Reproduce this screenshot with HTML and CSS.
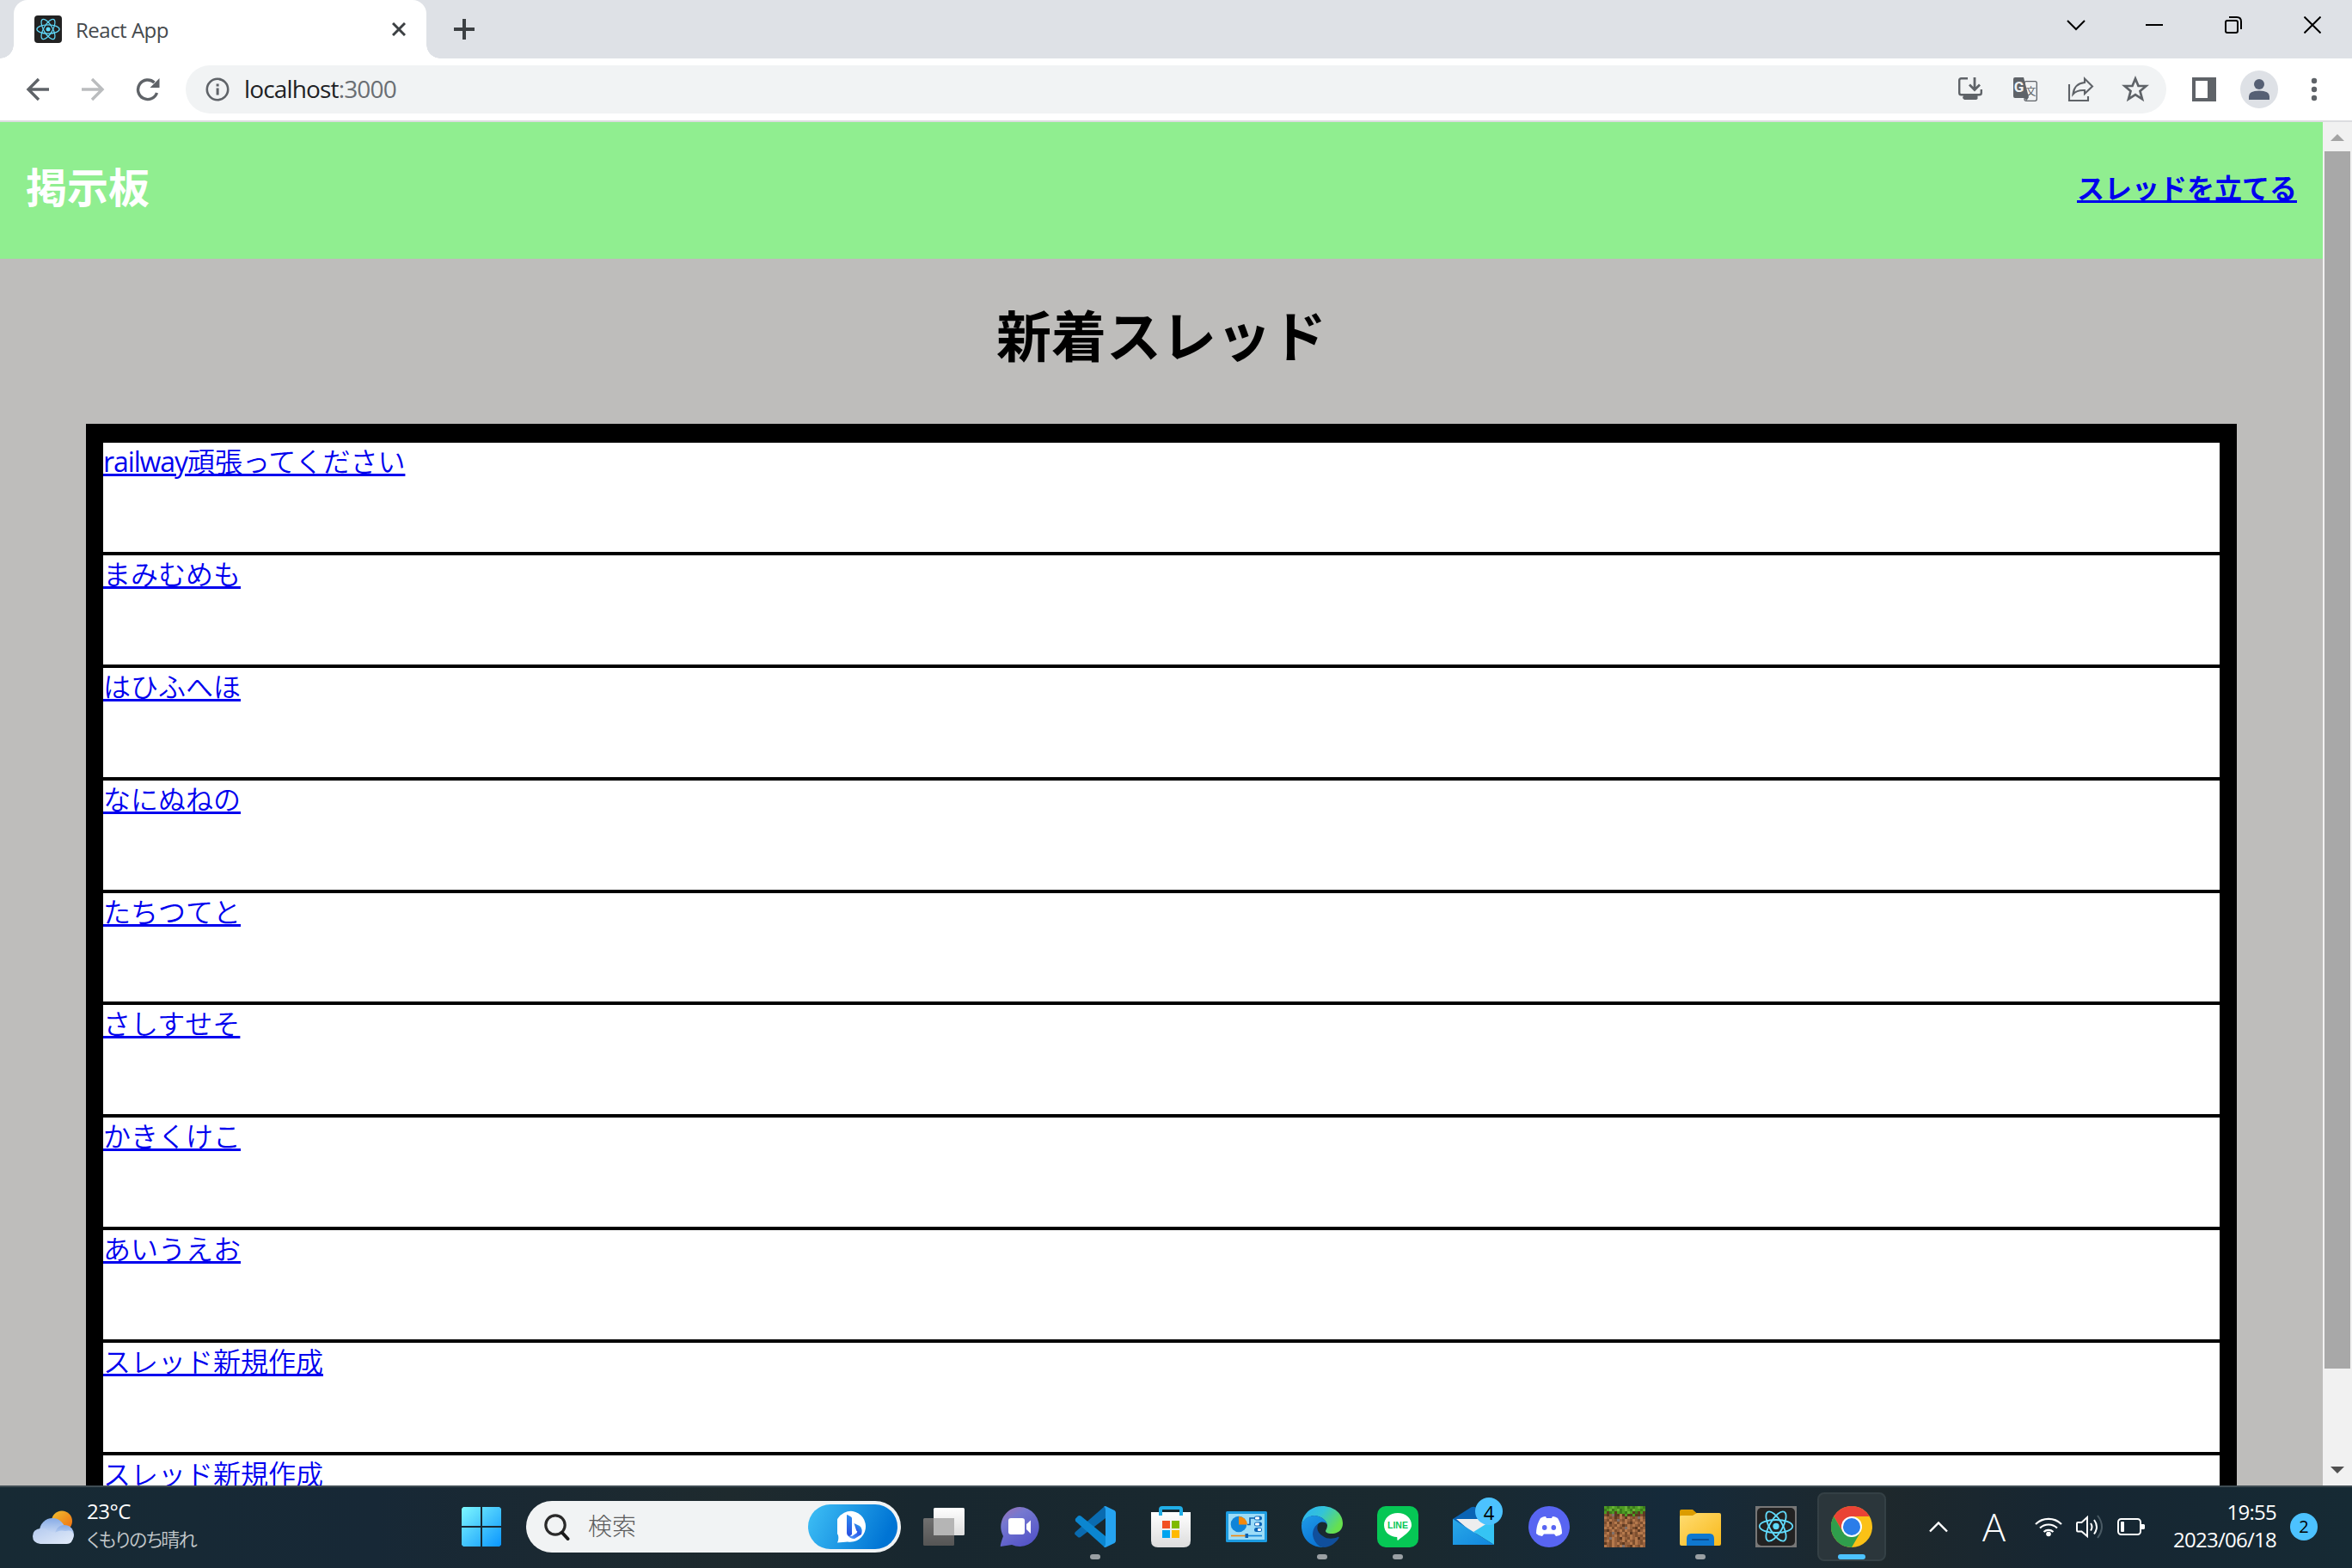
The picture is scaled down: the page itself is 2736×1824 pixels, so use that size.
FILE: index.html
```html
<!DOCTYPE html>
<html lang="ja">
<head>
<meta charset="utf-8">
<title>React App</title>
<link rel="stylesheet" href="styles.css">
</head>
<body>
<svg class="defs" width="0" height="0">
  <symbol id="react" viewBox="-12 -12 24 24">
    <g fill="none" stroke="#61dafb" stroke-width="1">
      <ellipse rx="10.5" ry="4.1"/>
      <ellipse rx="10.5" ry="4.1" transform="rotate(60)"/>
      <ellipse rx="10.5" ry="4.1" transform="rotate(120)"/>
    </g>
    <circle r="2" fill="#61dafb"/>
  </symbol>
</svg>

<div class="tabstrip">
  <div class="tab">
    <svg class="favicon" width="32" height="32"><rect width="32" height="32" rx="4" fill="#222"/><use href="#react" x="1" y="1" width="30" height="30"/></svg>
    <span class="tab-title">React App</span>
    <svg width="16" height="16" viewBox="0 0 16 16"><path d="M1 1L15 15M15 1L1 15" stroke="#3c4043" stroke-width="3"/></svg>
  </div>
  <svg class="newtab" width="24" height="24"><path d="M12 0V24M0 12H24" stroke="#3c4043" stroke-width="4"/></svg>
  <div class="winbtns">
    <span><svg class="caret" width="22" height="14" viewBox="0 0 22 14" ><path d="M1 2L11 12L21 2" fill="none" stroke="#000" stroke-width="2"/></svg></span>
    <span><svg width="20" height="2"><rect width="20" height="2"/></svg></span>
    <span><svg width="20" height="20" fill="none" stroke="#000" stroke-width="2"><rect x="1" y="5" width="14" height="14" rx="2"/><path d="M5 1H14Q19 1 19 6V15"/></svg></span>
    <span><svg width="20" height="20"><path d="M.5 .5L19.5 19.5M19.5 .5L.5 19.5" stroke="#000" stroke-width="2"/></svg></span>
  </div>
</div>

<div class="toolbar">
  <div class="nav">
    <span><svg width="28" height="28" fill="none" stroke="#5f6368" stroke-width="3.4"><path d="M27 14H3M15 2L3 14L15 26"/></svg></span>
    <span><svg width="28" height="28" fill="none" stroke="#babcbe" stroke-width="3.4"><path d="M1 14H25M13 2L25 14L13 26"/></svg></span>
    <span><svg width="28" height="28"><path d="M24.5 18A11.3 11.3 0 1 1 21.5 6" fill="none" stroke="#5f6368" stroke-width="3.4"/><path d="M27.500 1V12H16.500Z" fill="#5f6368"/></svg></span>
  </div>
  <div class="omnibox">
    <svg width="28" height="28"><circle cx="14" cy="14" r="12.2" fill="none" stroke="#5f6368" stroke-width="2.6"/><path d="M12.600 12.500h3v8h-3zM12.600 7.500h3v3h-3z" fill="#5f6368"/></svg>
    <span class="url">localhost<span class="port">:3000</span></span>
    <div class="actions">
      <svg width="32" height="32" fill="none" stroke="#5f6368" stroke-width="2.400"><path d="M13 3.200H5.500Q3.200 3.200 3.200 5.500V20Q3.200 22.300 5.500 22.300H26.500Q28.800 22.300 28.800 20V16"/><path d="M21 2V15.500M15 10.500L21 16.500L27 10.500" stroke-width="2.800"/><path d="M8 23H24.500V27L23 28H9L7 26Z" fill="#5f6368" stroke="none"/></svg>
      <svg width="32" height="32"><rect x="15" y="6.700" width="14.300" height="22.600" rx="2" fill="none" stroke="#5f6368" stroke-width="1.300"/><path d="M4 2H14L20 25L17.500 29L15 26H4Q2 26 2 24V4Q2 2 4 2Z" fill="#5f6368"/><text x="2.800" y="19" class="g">G</text><text x="16.500" y="22.500" class="bun">文</text></svg>
      <svg width="32" height="32" fill="none" stroke="#5f6368" stroke-width="2.100"><path d="M3 10V29H25V24"/><path d="M7.500 21.500Q9 9 21 8V3.500L30 12.500L21 21V17Q12 16.500 7.500 21.500Z"/></svg>
      <svg width="32" height="32"><path d="M16 3.500L19.500 12H28.500L21.500 18L24 27.300L16 22.200L8 27.300L10.500 18L3.500 12H12.500Z" fill="none" stroke="#5f6368" stroke-width="2.700"/></svg>
    </div>
  </div>
  <svg class="panel" width="28" height="28"><path fill-rule="evenodd" d="M0 0H28V28H0ZM4 4V24H18V4Z" fill="#5f6368"/></svg>
  <svg class="avatar" width="44" height="44"><circle cx="22" cy="22" r="22" fill="#dee1e6"/><circle cx="22" cy="16" r="6" fill="#566074"/><path d="M10 34V30Q10 23.500 22 23.500T34 30V34Z" fill="#566074"/></svg>
  <svg class="dots" width="8" height="28" fill="#5f6368"><circle cx="4" cy="4" r="3.200"/><circle cx="4" cy="14" r="3.200"/><circle cx="4" cy="24" r="3.200"/></svg>
</div>

<div class="viewport">
  <div class="page">
    <header class="header">
      <h1>掲示板</h1>
      <a class="create">スレッドを立てる</a>
    </header>
    <h2>新着スレッド</h2>
    <div class="threads">
      <div class="thread"><a><span class="latin">railway</span>頑張ってください</a></div>
      <div class="thread"><a>まみむめも</a></div>
      <div class="thread"><a>はひふへほ</a></div>
      <div class="thread"><a>なにぬねの</a></div>
      <div class="thread"><a>たちつてと</a></div>
      <div class="thread"><a>さしすせそ</a></div>
      <div class="thread"><a>かきくけこ</a></div>
      <div class="thread"><a>あいうえお</a></div>
      <div class="thread"><a>スレッド新規作成</a></div>
      <div class="thread"><a>スレッド新規作成</a></div>
    </div>
  </div>
  <div class="scrollbar">
    <svg width="16" height="8"><path d="M0 8L8 0L16 8Z" fill="#a3a3a3"/></svg>
    <div class="thumb"></div>
    <svg width="16" height="8"><path d="M0 0L8 8L16 0Z" fill="#505050"/></svg>
  </div>
</div>

<div class="taskbar">
  <div class="weather">
    <svg width="48" height="40" viewBox="0 0 48 40">
      <defs>
        <linearGradient id="sun" x1="0" y1="0" x2="1" y2="1"><stop offset="0" stop-color="#f0c030"/><stop offset="1" stop-color="#f06a10"/></linearGradient>
        <linearGradient id="cl" x1="0" y1="0" x2="0" y2="1"><stop offset="0" stop-color="#86abe6"/><stop offset=".6" stop-color="#cadaf4"/><stop offset="1" stop-color="#cfdef5"/></linearGradient>
        <linearGradient id="cl2" x1="0" y1="0" x2="1" y2="1"><stop offset="0" stop-color="#b4caef"/><stop offset="1" stop-color="#e3ecf9"/></linearGradient>
      </defs>
      <circle cx="34" cy="12.500" r="12" fill="url(#sun)"/>
      <circle cx="23" cy="24" r="15" fill="url(#cl)"/>
      <circle cx="37" cy="28" r="11" fill="url(#cl)"/>
      <path d="M9 21Q17 20 23 28Q30 22 38 24Q47 22 47.500 29Q47 39 39 39H9Q0 38 0 30Q0 22 9 21Z" fill="url(#cl2)"/>
    </svg>
    <div class="weather-text"><div>23°C</div><div class="cond">くもりのち晴れ</div></div>
  </div>

  <svg class="start" width="46" height="46"><defs><linearGradient id="win" gradientUnits="userSpaceOnUse" x1="0" y1="0" x2="46" y2="46"><stop offset="0" stop-color="#7df8ff"/><stop offset=".5" stop-color="#44c5fd"/><stop offset="1" stop-color="#0a96ff"/></linearGradient></defs><path fill="url(#win)" d="M2 0H22V22H0V2ZM24 0H44L46 2V22H24ZM0 24H22V46H2L0 44ZM24 24H46V44L44 46H24Z"/></svg>

  <div class="search">
    <svg width="30" height="31"><circle cx="13" cy="13" r="11.200" fill="none" stroke="#2a2a2a" stroke-width="3.200"/><path d="M21 22L27.500 29" stroke="#1a1a1a" stroke-width="4" stroke-linecap="round"/></svg>
    <span class="search-label">検索</span>
    <div class="bing">
      <svg width="36" height="38" viewBox="0 0 36 38">
        <defs><linearGradient id="bg" x1="0" y1="0" x2="0" y2="1"><stop offset="0" stop-color="#2b8df0"/><stop offset="1" stop-color="#2a4de0"/></linearGradient><linearGradient id="bg2" x1="0" y1="1" x2="1" y2="0"><stop offset="0" stop-color="#5aa8ff"/><stop offset=".6" stop-color="#2a58e8"/><stop offset="1" stop-color="#30c8e8"/></linearGradient></defs>
        <path d="M18 1A18 18 0 1 1 12 36.500Q7 37 0 37.500Q2 34 1 29A18 18 0 0 1 18 1Z" fill="#fff"/>
        <path d="M11.500 28L17 30L23 26L19.500 15L26 18Q30 21 28 28L20 33Q14 33 11.500 28Z" fill="url(#bg2)"/>
        <path d="M17 21V28L23.500 24.500Z" fill="#fff"/>
        <path d="M11 6Q11 4.500 12.500 5.500L16 7.500Q17 8 17 9.500V28L14 30Q11 29 11 26Z" fill="url(#bg)"/>
      </svg>
    </div>
  </div>

  <div class="apps">
    <span class="app"><svg width="48" height="48"><defs><linearGradient id="tv" x1="0" y1="0" x2="0" y2="1"><stop offset="0" stop-color="#fff"/><stop offset="1" stop-color="#ddd"/></linearGradient><linearGradient id="tv2" x1="0" y1="0" x2="0" y2="1"><stop offset="0" stop-color="#707070"/><stop offset="1" stop-color="#555"/></linearGradient></defs><rect y="14" width="36" height="32" rx="1.500" fill="url(#tv2)"/><rect x="12" y="2" width="36" height="32" rx="1.500" fill="url(#tv)"/><rect x="12" y="14" width="24" height="20" fill="#b5b5b5"/></svg></span>
    <span class="app"><svg width="48" height="48"><defs><linearGradient id="ch" x1="0" y1="0" x2=".6" y2="1"><stop offset="0" stop-color="#a070b0"/><stop offset=".35" stop-color="#7578d0"/><stop offset="1" stop-color="#5555c8"/></linearGradient></defs><path d="M24 1A22.500 23 0 1 1 15 45L2 47Q1 46 5 35A22.500 23 0 0 1 24 1Z" fill="url(#ch)"/><rect x="11" y="14" width="19" height="19" rx="3" fill="#fff"/><path d="M32 21L37 16.500V32L32 27Z" fill="#fff"/></svg></span>
    <span class="app run"><svg width="48" height="48"><path d="M36 0V14L7 36Q5 37 4 36L.5 33Q-.5 31.500 1 30L34 1Z" fill="#0a6bb0"/><path d="M.8 15L4 11.500Q6 10.500 8 12L36 35V48L34 47L1 17.500Z" fill="#0b86d0"/><path d="M34 .5L36 0L46.500 5Q48 6 48 8V40Q48 42 46.500 43L36 48L34 47.500Q36 47 36 44V4Q36 1 34 .5Z" fill="#25a3f0"/></svg></span>
    <span class="app"><svg width="48" height="48"><defs><linearGradient id="st" x1="0" y1="0" x2="0" y2="1"><stop offset="0" stop-color="#fff"/><stop offset="1" stop-color="#dcdcdc"/></linearGradient></defs><path d="M1 7H47V40Q47 48 39 48H9Q1 48 1 40Z" fill="url(#st)"/><path d="M12 11V4Q12 2 14 2H34Q36 2 36 4V11" fill="none" stroke="#20aee8" stroke-width="4"/><path d="M14 17h9v9h-9z" fill="#f25022"/><path d="M25 17h9v9h-9z" fill="#7fba00"/><path d="M14 28h9v9h-9z" fill="#00a4ef"/><path d="M25 28h9v9h-9z" fill="#ffb900"/></svg></span>
    <span class="app"><svg width="48" height="48"><rect y="6" width="48" height="36" rx="1.500" fill="#1c9be0"/><rect x="3" y="9" width="42" height="30" fill="#9cdcf8"/><circle cx="15" cy="21" r="9.300" fill="#1084d8"/><path d="M15 12A10 10 0 0 1 25 21.500H15Z" fill="#f5880a"/><path d="M25 21.500H28V14H34" fill="none" stroke="#0b5fae" stroke-width="1.600"/><g fill="#0b66b8"><rect x="33" y="11.500" width="9" height="5" rx="2.500"/><rect x="33" y="18.500" width="9" height="5" rx="2.500"/><rect x="33" y="25" width="9" height="5" rx="2.500"/></g><g fill="#fff"><rect x="34" y="12.500" width="5" height="3" rx="1"/><rect x="34" y="19.500" width="5" height="3" rx="1"/><rect x="37" y="26" width="4" height="3" rx="1"/></g><path d="M6 34.500H23" stroke="#f5880a" stroke-width="1.600"/><path d="M24 34.500H42" stroke="#1084d8" stroke-width="1.600"/><rect x="22.500" y="32" width="3.500" height="5" fill="#0b5fae"/></svg></span>
    <span class="app run"><svg width="48" height="48" viewBox="0 0 48 48"><defs><linearGradient id="e1" x1="0" y1="0" x2="1" y2=".5"><stop offset="0" stop-color="#2bb0f5"/><stop offset=".5" stop-color="#33c3d8"/><stop offset="1" stop-color="#66e04e"/></linearGradient><linearGradient id="e2" x1="0" y1="0" x2=".5" y2="1"><stop offset="0" stop-color="#1f9be8"/><stop offset="1" stop-color="#0a74d4"/></linearGradient></defs><path d="M0 22C1 9 11 0 24 0C38 0 48 9 48 20C48 28 42 32 35 32C30 32 28 30.500 28 29C28 28 30 26 30 22C29 16 22 11 14 11C7 12 2 16 0 22Z" fill="url(#e1)"/><path d="M0 22C2 15 8 11 15 11C22 11 29 16 30 22C29 19 26 18 23 18.500C18 20 14 26 14 33C14 40 19 47 26 48C11 48.500 -.5 38 0 22Z" fill="url(#e2)"/><path d="M20 20C15 23 13 28 13 33C14 41 19 47 27 48C34 47 40 43 43.500 37C44 35.500 43 35.500 42 36C38 38 30 39 25 35C18 31 17 25 20 20Z" fill="#104f9c"/></svg></span>
    <span class="app run"><svg width="48" height="48"><rect width="48" height="48" rx="10" fill="#06c755"/><path d="M24 8C33 8 40 14 40 22C40 30 28 36 24 40C22.500 39 24 37 23 36C13 35.500 8 29 8 22C8 14 15 8 24 8Z" fill="#fff"/><text x="12" y="26" class="line">LINE</text></svg></span>
    <span class="app"><svg width="48" height="48"><defs><linearGradient id="ml" x1="0" y1="0" x2="1" y2="1"><stop offset="0" stop-color="#2aa9e8"/><stop offset="1" stop-color="#1086de"/></linearGradient></defs><path d="M0 15L21 1.500Q24 0 27 1.500L48 15V30H0Z" fill="#0a63b4"/><path d="M4 15H44V28L24 32Z" fill="#eee"/><path d="M48 15V45L24 30Z" fill="#35c4f4"/><path d="M0 15L48 45H0Z" fill="url(#ml)"/></svg><b class="badge">4</b></span>
    <span class="app"><svg width="48" height="48"><circle cx="24" cy="24" r="24" fill="#5865f2"/><path d="M14 14Q17 12 20 12L21 14H27L28 12Q31 12 34 14Q39 22 39 32Q36 35 32 35L30 32.500H18L16 35Q12 35 9 32Q9 22 14 14Z" fill="#fff"/><ellipse cx="18.700" cy="25" rx="2.800" ry="3" fill="#5865f2"/><ellipse cx="29.300" cy="25" rx="2.800" ry="3" fill="#5865f2"/></svg></span>
    <span class="app"><svg id="block" width="48" height="48" viewBox="0 0 16 16" shape-rendering="crispEdges"></svg></span>
    <span class="app run"><svg width="48" height="48"><defs><linearGradient id="fo" x1="0" y1="0" x2="1" y2="1"><stop offset="0" stop-color="#ffdc72"/><stop offset="1" stop-color="#f8b91a"/></linearGradient></defs><path d="M0 6Q0 4 2 4H15L20 8.500V14H0Z" fill="#dc9c00"/><path d="M0 12Q0 11 2 11H15L20 8H46Q48 8 48 10V44Q48 46 46 46H2Q0 46 0 44Z" fill="url(#fo)"/><path d="M8 46V38Q8 32 13 32H35Q40 32 40 38V46Z" fill="#0f78d0"/><path d="M15 39H33" stroke="#0a4f96" stroke-width="2.200" stroke-linecap="round"/></svg></span>
    <span class="app"><svg width="48" height="48"><rect width="48" height="48" fill="#777"/><rect x="2" y="2" width="44" height="44" rx="5" fill="#222"/><use href="#react" x="2" y="1.500" width="44" height="44"/></svg></span>
    <span class="app active"><svg width="48" height="48" viewBox="0 0 48 48"><circle cx="24" cy="24" r="24" fill="#fbc116"/><path d="M3.200 12A24 24 0 0 1 44.800 12H24L13.600 30Z" fill="#ea4335"/><path d="M3.200 12A24 24 0 0 0 24 48L34.400 30L24 24L13.600 30Z" fill="#2f9e4c"/><circle cx="24" cy="24" r="12" fill="#fff"/><circle cx="24" cy="24" r="10" fill="#2b7de9"/></svg></span>
  </div>

  <div class="tray">
    <svg class="up" width="22" height="14"><path d="M1 12.500L11 2.500L21 12.500" fill="none" stroke="#fff" stroke-width="2.400"/></svg>
    <span class="ime">A</span>
    <svg width="32" height="26" fill="none" stroke="#fff" stroke-width="2.200"><path d="M1 10A21.500 21.500 0 0 1 31 10"/><path d="M6 14.500A14.500 14.500 0 0 1 26 14.500"/><path d="M10.500 19A8 8 0 0 1 21.500 19"/><circle cx="16" cy="21.500" r="2.800" fill="#fff" stroke="none"/></svg>
    <svg width="32" height="28" fill="none" stroke="#fff" stroke-width="2"><path d="M1 10Q1 9 2 9H6.500L13 3V25L6.500 19.500H2Q1 19.500 1 18Z"/><path d="M17 10Q20 14 17 18.500M21 6Q27 14 21 22.500"/><path d="M25 1Q35 14 25 27" stroke="#4a5a64"/></svg>
    <svg width="32" height="20"><rect x="1" y="1" width="26" height="18" rx="3.500" fill="none" stroke="#fff" stroke-width="2"/><rect x="4" y="4" width="4" height="12" rx="1" fill="#fff"/><path d="M28 7H31L32 8V12L31 13H28Z" fill="#fff"/></svg>
    <div class="clock"><div>19:55</div><div>2023/06/18</div></div>
    <span class="count">2</span>
  </div>
</div>
<script src="block.js"></script>
</body>
</html>
```
FILE: block.js
```js
// Grass block icon: 16x16 pixels, g/G/l = greens, digits = dirt tones, s = stone
const rows = [
  'gGglgGgglGgGglgG',
  'GglGglGglgGlggGg',
  'gdGgdgGgGlgdGdgd',
  '1d2sdd3dgddgdd1d',
  '3212d132d3212s31',
  '21321s2132132132',
  '13d2313231d23213',
  '2312132d13232131',
  '32313212s321d312',
  '1d23123132132d23',
  '231s2d2313d21332',
  '3212313212321213',
  '12s321d321323d21',
  '2313212313213213',
  'd213231d22313212',
  '3213213s21d32132'
];
const colors = { g: '#4d9c23', G: '#3c7a1c', l: '#67b235', d: '#5e3a22', 1: '#7d4f2f', 2: '#96603c', 3: '#b5794c', s: '#80706a' };
const svg = document.getElementById('block');
rows.forEach((row, y) => [...row].forEach((c, x) => {
  const r = document.createElementNS('http://www.w3.org/2000/svg', 'rect');
  r.setAttribute('x', x);
  r.setAttribute('y', y);
  r.setAttribute('width', 1);
  r.setAttribute('height', 1);
  r.setAttribute('fill', colors[c]);
  svg.append(r);
}));
```
FILE: styles.css
```css
* { box-sizing: border-box; }
body {
  margin: 0;
  width: 2736px;
  height: 1824px;
  overflow: hidden;
  display: flex;
  flex-direction: column;
  font-family: "Open Sans", "Noto Sans CJK JP", sans-serif;
  background: #fff;
}
svg { display: block; flex: none; }
.defs { position: absolute; }

/* tab strip */
.tabstrip { height: 68px; flex: none; display: flex; background: #dee1e6; padding-left: 16px; }
.tab {
  position: relative;
  width: 480px;
  display: flex;
  align-items: center;
  padding: 0 24px;
  background: #fff;
  border-radius: 16px 16px 0 0;
}
.tab::before, .tab::after {
  content: "";
  position: absolute;
  bottom: 0;
  width: 16px;
  height: 16px;
}
.tab::before { left: -16px; background: radial-gradient(circle at 0 0, transparent 15.5px, #fff 16px); }
.tab::after { right: -16px; background: radial-gradient(circle at 100% 0, transparent 15.5px, #fff 16px); }
.tab-title { flex: 1; margin-left: 16px; padding-top: 2px; font-size: 24px; line-height: 32px; letter-spacing: -.5px; color: #45494d; }
.newtab { margin: 22px 0 0 32px; }
.winbtns { margin-left: auto; display: flex; height: 58px; }
.winbtns span { width: 92px; display: flex; align-items: center; justify-content: center; }
.caret { margin-left: 2px; }

/* toolbar */
.toolbar { height: 74px; flex: none; display: flex; align-items: center; border-bottom: 2px solid #dcdde0; padding-left: 12px; }
.nav { display: flex; width: 204px; }
.nav span { width: 64px; display: flex; justify-content: center; }
.omnibox { width: 2304px; height: 56px; border-radius: 28px; background: #f1f3f4; display: flex; align-items: center; padding: 0 20px 0 23px; }
.url { margin-left: 17px; padding-bottom: 2px; font-size: 28px; line-height: 40px; letter-spacing: -.85px; color: #202124; }
.port { color: #6a6e73; }
.actions { margin-left: auto; display: flex; gap: 32px; }
.g { font: bold 17px Roboto, sans-serif; fill: #f1f3f4; }
.bun { font: 12px "Noto Sans CJK JP", sans-serif; fill: #5f6368; }
.panel { margin-left: 30px; }
.avatar { margin-left: 28px; }
.dots { margin-left: 38px; }

/* page */
.viewport { flex: 1; min-height: 0; display: flex; overflow: hidden; }
.page { width: 2702px; background: #bebdbb; overflow: hidden; }
.header { height: 159px; background: #90ee90; display: flex; justify-content: space-between; align-items: center; padding: 0 30px; }
h1 { margin: 0; color: #fff; font-size: 48px; line-height: 72px; padding-bottom: 7px; }
h2 { margin: 45px 0 57px; text-align: center; font-size: 64px; line-height: 90px; height: 90px; }
a { color: #0000ee; text-decoration: underline 3px; text-underline-offset: 2px; }
.create { font-size: 32px; font-weight: bold; line-height: 44px; padding-bottom: 5px; }
.threads { margin: 0 100px; border: 20px solid #000; border-top-width: 22px; background: #fff; }
.thread { height: 130.89px; border-bottom: 4px solid #000; font-size: 32px; line-height: 43px; font-weight: 350; }
.latin { letter-spacing: -1.1px; font-weight: 400; }
.scrollbar { width: 34px; background: #f1f1f1; display: flex; flex-direction: column; align-items: center; padding: 14px 0 14px; }
.thumb { width: 30px; height: 1416px; margin: 12px 0 auto; background: #a8a8a8; }

/* taskbar */
.taskbar {
  height: 96px;
  flex: none;
  display: flex;
  align-items: center;
  border-top: 2px solid #3f4c53;
  padding-bottom: 2px;
  background: linear-gradient(90deg, #172a34 0, #172836 16%, #1e2a2e 31%, #18272f 39%, #1a292f 60%, #152a3a 71%, #1e282c 80%, #162632 88%, #162a34 100%);
  color: #fff;
}
.weather { width: 499px; display: flex; padding: 1px 0 0 38px; margin-right: 38px; align-items: center; }
.weather-text { margin-left: 15px; padding-bottom: 5px; font-size: 24px; line-height: 32px; letter-spacing: -.5px; }
.cond { color: #c4c9cc; font-size: 22px; font-weight: 350; letter-spacing: -1.7px; font-feature-settings: "palt"; }
.start { margin-right: 29px; }
.search { width: 436px; height: 60px; border-radius: 30px; background: #f1f3f4; display: flex; align-items: center; padding: 0 4px 0 21px; }
.search-label { margin-left: 21px; padding-bottom: 2px; font-size: 28px; line-height: 40px; color: #5c5c5c; font-weight: 300; }
.bing { margin-left: auto; width: 104px; height: 52px; border-radius: 26px; background: linear-gradient(115deg, #3fc0f6, #0074d4 85%); display: flex; align-items: center; justify-content: center; }
.apps { display: flex; margin-left: 10px; gap: 8px; }
.app { position: relative; width: 80px; height: 80px; display: flex; align-items: center; justify-content: center; border-radius: 8px; }
.app.active { background: #2b363b; border: 2px solid #344045; }
.run::after, .active::after { content: ""; position: absolute; bottom: 2px; width: 12px; height: 6px; border-radius: 3px; background: #9aa0a4; }
.active::after { bottom: 0; width: 32px; background: #4cc2ff; }
.badge { position: absolute; left: 42px; top: 6px; width: 32px; height: 32px; border-radius: 50%; background: #4cc2ff; color: #000; font-size: 22px; font-weight: 400; line-height: 34px; text-align: center; }
.line { font: bold 10.500px "Liberation Sans", sans-serif; fill: #06c755; }
.tray { display: flex; align-items: center; margin-left: 50px; }
.tray > svg { margin-right: 16px; }
.tray > .up { margin-right: 40px; }
.ime { width: 26px; font-size: 45px; line-height: 50px; font-weight: 300; margin-right: 35px; }
.clock { width: 137px; padding-bottom: 2px; text-align: right; font-size: 24px; line-height: 32px; letter-spacing: -.75px; margin-right: 16px; }
.count { width: 32px; height: 32px; border-radius: 50%; background: #4cc2ff; color: #000; font-size: 20px; line-height: 32px; text-align: center; }
```
